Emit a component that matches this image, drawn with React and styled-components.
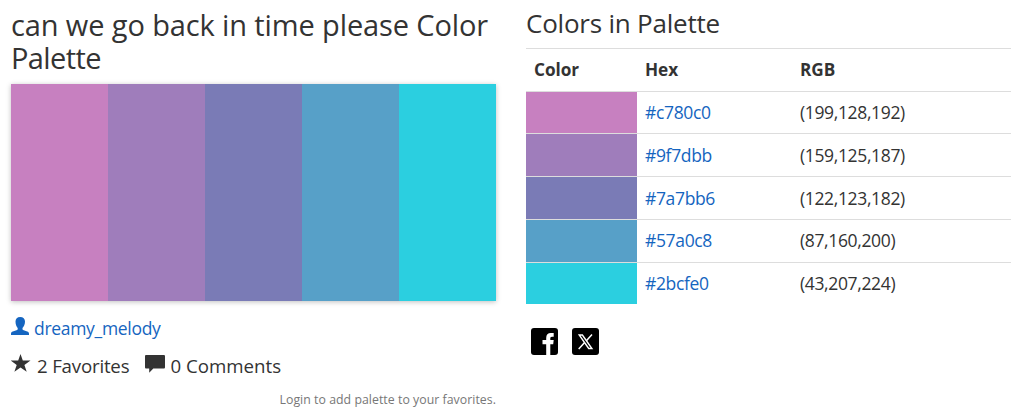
import React from "react";
import styled, { createGlobalStyle } from "styled-components";

const Global = createGlobalStyle`
  * { box-sizing: border-box; }
  body {
    margin: 0;
    background: #fff;
    color: #333;
    font-family: "Segoe UI", "Open Sans", "Noto Sans", sans-serif;
    font-size: 17.5px;
    overflow: hidden;
  }
`;

const Page = styled.main`
  display: grid;
  grid-template-columns: 485px 485px;
  column-gap: 30px;
  padding: 0 11px;
  height: 416px;
`;

const Column = styled.section`
  min-width: 0;
`;

const Title = styled.h1`
  margin: 8px 0 0;
  height: 76px;
  font-size: 29px;
  font-weight: 400;
  line-height: 33px;
  white-space: nowrap;
`;

const TitleLine = styled.span`
  display: block;
  letter-spacing: ${(p) => p.$spacing};
`;

const Subtitle = styled.h2`
  margin: 0;
  padding-top: 9px;
  height: 48px;
  font-size: 26px;
  font-weight: 400;
  line-height: 29px;
  letter-spacing: -0.22px;
  white-space: nowrap;
`;

const Palette = styled.div`
  display: flex;
  height: 217px;
  box-shadow: 0 1px 5px rgba(0, 0, 0, 0.25);
`;

const Swatch = styled.div`
  flex: 1;
  background: ${(p) => p.$color};
`;

const Author = styled.a`
  display: flex;
  align-items: center;
  margin-top: 14px;
  height: 26px;
  color: #1565c0;
  text-decoration: none;
  letter-spacing: -0.3px;
`;

const Stats = styled.div`
  display: flex;
  align-items: center;
  margin-top: 9px;
  height: 30px;
  font-size: 18.7px;
`;

const Stat = styled.span`
  display: flex;
  align-items: center;
  letter-spacing: ${(p) => p.$spacing};
  margin-right: 16px;
`;

const Icon = styled.svg`
  flex: none;
  display: block;
  margin-right: ${(p) => p.$gap || 0}px;
  margin-bottom: ${(p) => p.$lift || 0}px;
  fill: currentColor;
`;

const Note = styled.p`
  margin: 10px 0 0;
  line-height: 20px;
  font-size: 12.3px;
  letter-spacing: 0.04px;
  color: #777;
  text-align: right;
`;

const Row = styled.div`
  display: grid;
  grid-template-columns: 111px 155px 1fr;
  height: 42.72px;
  border-top: 1px solid #ddd;
  font-size: ${(p) => (p.$head ? "17.2px" : "17.5px")};
  font-weight: ${(p) => (p.$head ? 700 : 400)};
  letter-spacing: ${(p) => (p.$head ? "-0.05px" : "-0.35px")};
`;

const Cell = styled.div`
  display: flex;
  align-items: center;
  padding: 0 8px 1px;
  background: ${(p) => p.$color || "transparent"};
`;

const HexLink = styled.a`
  color: #1565c0;
  text-decoration: none;
`;

const Share = styled.div`
  display: flex;
  gap: 14px;
  padding: 23.7px 0 0 4.5px;
`;

const colors = [
  ["#c780c0", "(199,128,192)"],
  ["#9f7dbb", "(159,125,187)"],
  ["#7a7bb6", "(122,123,182)"],
  ["#57a0c8", "(87,160,200)"],
  ["#2bcfe0", "(43,207,224)"],
];

export default function App() {
  return (
    <>
      <Global />
      <Page>
        <Column>
          <Title>
            <TitleLine $spacing="-0.12px">can we go back in time please Color</TitleLine>
            <TitleLine $spacing="-0.6px">Palette</TitleLine>
          </Title>
          <Palette>
            {colors.map(([hex]) => (
              <Swatch key={hex} $color={hex} />
            ))}
          </Palette>
          <Author href="#">
            <Icon $gap={5} $lift={4} width="18" height="18" viewBox="0 0 18 18">
              <path d="M9.200 0C6.200 0 4.500 1.700 4.500 4.600c0 2.700.9 5.100 2.200 6.400v.9c0 .7-.4 1-1.200 1.300l-3.700 1.400C.7 15 0 15.700 0 16.700V18h18v-1.300c0-1-.7-1.700-1.800-2.100l-3.500-1.400c-.8-.3-1.200-.6-1.200-1.300V11c1.400-1.300 2.500-3.700 2.500-6.400C14 1.700 12.200 0 9.200 0z" />
            </Icon>
            dreamy_melody
          </Author>
          <Stats>
            <Stat $spacing="-0.2px">
              <Icon $gap={6} $lift={5} width="20" height="18" viewBox="0 0 20 18">
                <path d="M9.500 0l2.300 6.500h7.700l-6.100 4.400 2.300 6.800-6.200-4.200-6.100 4.200 2.300-6.800L-.3 6.500h7.500z" />
              </Icon>
              2 Favorites
            </Stat>
            <Stat $spacing="0px">
              <Icon $gap={5} $lift={3} width="20" height="18" viewBox="0 0 20 18">
                <path d="M1.300 0h17.400C19.500 0 20 .5 20 1.300v11c0 .8-.5 1.300-1.300 1.300H8.300L4.200 17.800v-4.200H1.300C.5 13.600 0 13.100 0 12.300v-11C0 .5.5 0 1.300 0z" />
              </Icon>
              0 Comments
            </Stat>
          </Stats>
          <Note>Login to add palette to your favorites.</Note>
        </Column>
        <Column>
          <Subtitle>Colors in Palette</Subtitle>
          <Row $head>
            <Cell>Color</Cell>
            <Cell>Hex</Cell>
            <Cell>RGB</Cell>
          </Row>
          {colors.map(([hex, rgb]) => (
            <Row key={hex}>
              <Cell $color={hex} />
              <Cell>
                <HexLink href="#">{hex}</HexLink>
              </Cell>
              <Cell>{rgb}</Cell>
            </Row>
          ))}
          <Share>
            <Icon width="27" height="27" viewBox="0 0 27 27">
              <rect width="27" height="27" rx="3" fill="#000" />
              <path fill="#fff" d="M15.200 27V16.200h-3.700v-4.300h3.700v-2C15.200 6.700 16.900 5 19.800 5h2.900v3.700h-1.700c-1.300 0-1.700.7-1.700 1.800v1.400h3.400l-.5 4.300h-2.900V27z" />
            </Icon>
            <Icon width="27" height="27" viewBox="0 0 27 27">
              <rect width="27" height="27" rx="3" fill="#000" />
              <path d="M7.200 7h3.200l9.500 13.500h-3.200z" fill="none" stroke="#fff" strokeWidth="1.400" />
              <path d="M20 6.500l-5.600 6.300M12.400 14.700L6.700 21.100" fill="none" stroke="#fff" strokeWidth="1.500" />
            </Icon>
          </Share>
        </Column>
      </Page>
    </>
  );
}
